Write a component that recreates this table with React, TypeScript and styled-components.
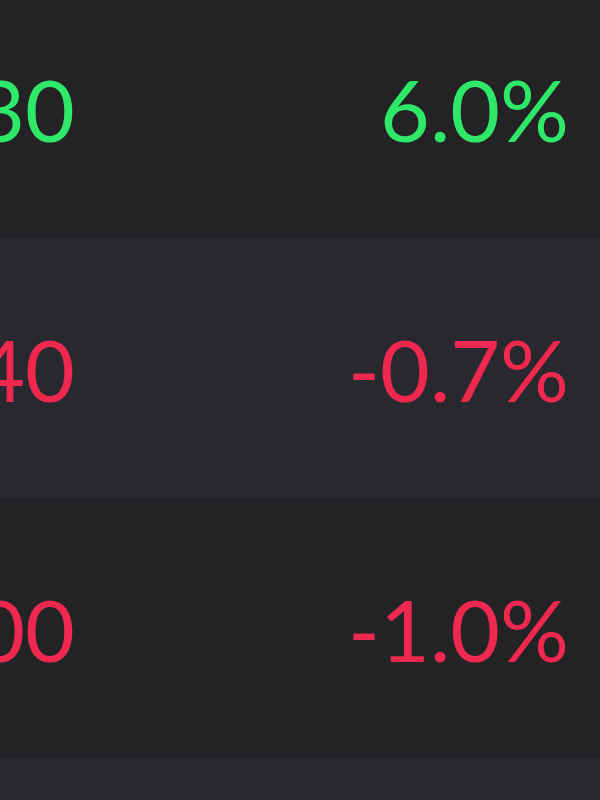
import { createGlobalStyle, styled } from "styled-components";

type Quote = {
    price: string
    change: number
}

const quotes: Quote[] = [
    { price: "1,230", change: 6.0 },
    { price: "2,540", change: -0.7 },
    { price: "1,800", change: -1.0 },
    { price: "", change: 0 },
]

export default function App() {
    return (
        <>
            <GlobalStyle />
            <Page>
                <Table>
                    {quotes.map((q, i) => (
                        <Row key={i} $odd={i % 2 === 1}>
                            <Price $up={q.change >= 0}>{q.price}</Price>
                            <Change $up={q.change >= 0}>
                                {q.price ? `${q.change.toFixed(1)}%` : ""}
                            </Change>
                        </Row>
                    ))}
                </Table>
            </Page>
        </>
    )
}

const GlobalStyle = createGlobalStyle`
    html, body {
        margin: 0;
        padding: 0;
        background: #232326;
        overflow: hidden;
    }
`

const Page = styled.div`
    width: 600px;
    height: 800px;
    overflow: hidden;
    background: #232326;
    font-family: Lato, "Open Sans", sans-serif;
`

const Table = styled.div`
    display: flex;
    flex-direction: column;
    width: 900px;
    margin: -22px 0 0 -300px;
`

const Row = styled.div<{ $odd: boolean }>`
    display: grid;
    grid-template-columns: 375px 1fr;
    align-items: center;
    height: 260px;
    padding: 1px 31px 0 0;
    box-sizing: border-box;
    background: ${p => p.$odd ? "#29282e" : "#232326"};
`

const Price = styled.span<{ $up: boolean }>`
    text-align: right;
    font-size: 86px;
    font-weight: 400;
    color: ${p => p.$up ? "#2fe86a" : "#ee284f"};
`

const Change = styled(Price)`
    text-align: right;
`
